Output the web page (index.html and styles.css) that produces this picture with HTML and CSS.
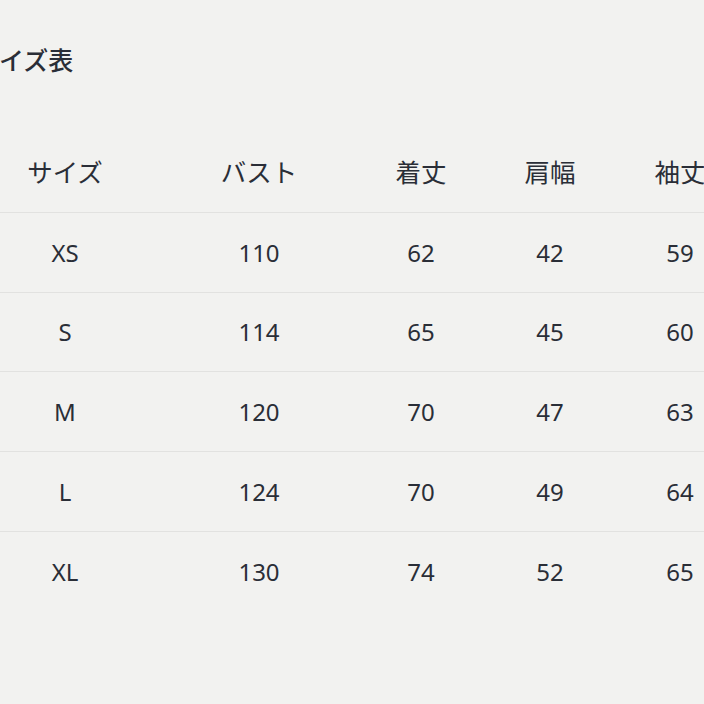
FILE: index.html
```html
<!DOCTYPE html>
<html lang="ja">
<head>
<meta charset="utf-8">
<link rel="stylesheet" href="styles.css">
</head>
<body>
<div class="page">
  <h1 class="title">サイズ表</h1>
  <div class="table">
    <div class="row head">
      <div class="c c1">サイズ</div><div class="c c2">バスト</div><div class="c c3">着丈</div><div class="c c4">肩幅</div><div class="c c5">袖丈</div>
    </div>
    <div class="row">
      <div class="c c1">XS</div><div class="c c2">110</div><div class="c c3">62</div><div class="c c4">42</div><div class="c c5">59</div>
    </div>
    <div class="row">
      <div class="c c1">S</div><div class="c c2">114</div><div class="c c3">65</div><div class="c c4">45</div><div class="c c5">60</div>
    </div>
    <div class="row">
      <div class="c c1">M</div><div class="c c2">120</div><div class="c c3">70</div><div class="c c4">47</div><div class="c c5">63</div>
    </div>
    <div class="row">
      <div class="c c1">L</div><div class="c c2">124</div><div class="c c3">70</div><div class="c c4">49</div><div class="c c5">64</div>
    </div>
    <div class="row">
      <div class="c c1">XL</div><div class="c c2">130</div><div class="c c3">74</div><div class="c c4">52</div><div class="c c5">65</div>
    </div>
  </div>
</div>
</body>
</html>
```
FILE: styles.css
```css
html, body {
  margin: 0;
  padding: 0;
  background: #f2f2f0;
  overflow: hidden;
}
.page {
  width: 704px;
  height: 704px;
  overflow: hidden;
  padding-top: 42px;
  box-sizing: border-box;
  font-family: "Noto Sans", "Noto Sans CJK JP", sans-serif;
  color: #2a2e37;
}
.title {
  margin: 0 0 0 -26px;
  font-size: 25px;
  font-weight: 500;
  line-height: 36px;
  white-space: nowrap;
}
.table {
  margin-top: 54px;
  width: 760px;
}
.row {
  display: grid;
  grid-template-columns: 130px 258px 66px 192px 68px;
  height: 79.75px;
  align-items: center;
  border-top: 1.5px solid #e2e2e0;
  box-sizing: border-box;
  font-size: 24px;
}
.row.head {
  border-top: none;
  font-size: 25.5px;
  padding-bottom: 2px;
}
.c {
  text-align: center;
  white-space: nowrap;
  display: flex;
  justify-content: center;
}
```
